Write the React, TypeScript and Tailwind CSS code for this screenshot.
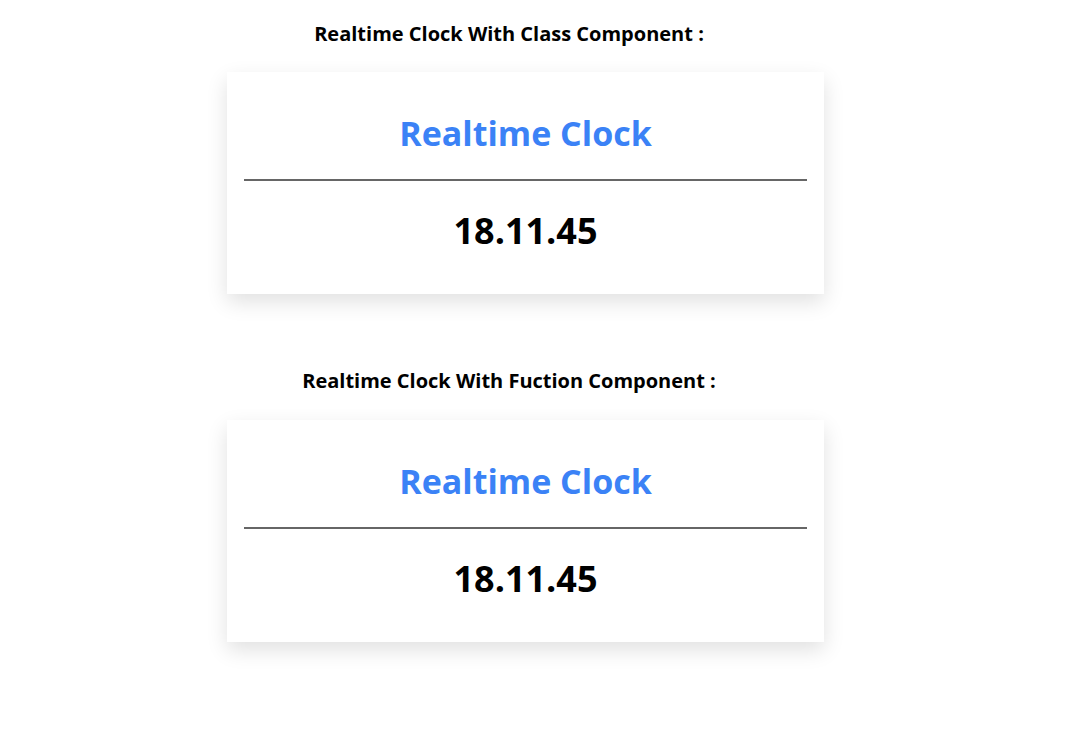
import React from "react";

function Card() {
  return (
    <div className="w-[597px] bg-white shadow-[0_8px_20px_rgba(0,0,0,0.12)] px-[17px] pt-[37px] pb-[39px] flex flex-col items-center">
      <div className="h-[48px] leading-[48px] text-[34px] font-bold text-[#3b82f6]">Realtime Clock</div>
      <div className="w-full mt-[22px] border-t-2 border-[#666666]" />
      <div className="mt-[26px] h-[48px] leading-[48px] text-[36px] font-bold text-black">18.11.45</div>
    </div>
  );
}

export default function App() {
  return (
    <div className="min-h-[747px] bg-white" style={{ fontFamily: '"Open Sans", "Noto Sans", sans-serif' }}>
      <div className="ml-[227px] w-[597px] pt-[20px] flex flex-col">
        <div className="pr-[33px] h-[28px] leading-[28px] text-center text-[20px] font-bold text-black">Realtime Clock With Class Component :</div>
        <div className="mt-[24px]"><Card /></div>
        <div className="mt-[73px] pr-[33px] h-[28px] leading-[28px] text-center text-[20px] font-bold text-black">Realtime Clock With Fuction Component :</div>
        <div className="mt-[25px]"><Card /></div>
      </div>
    </div>
  );
}
